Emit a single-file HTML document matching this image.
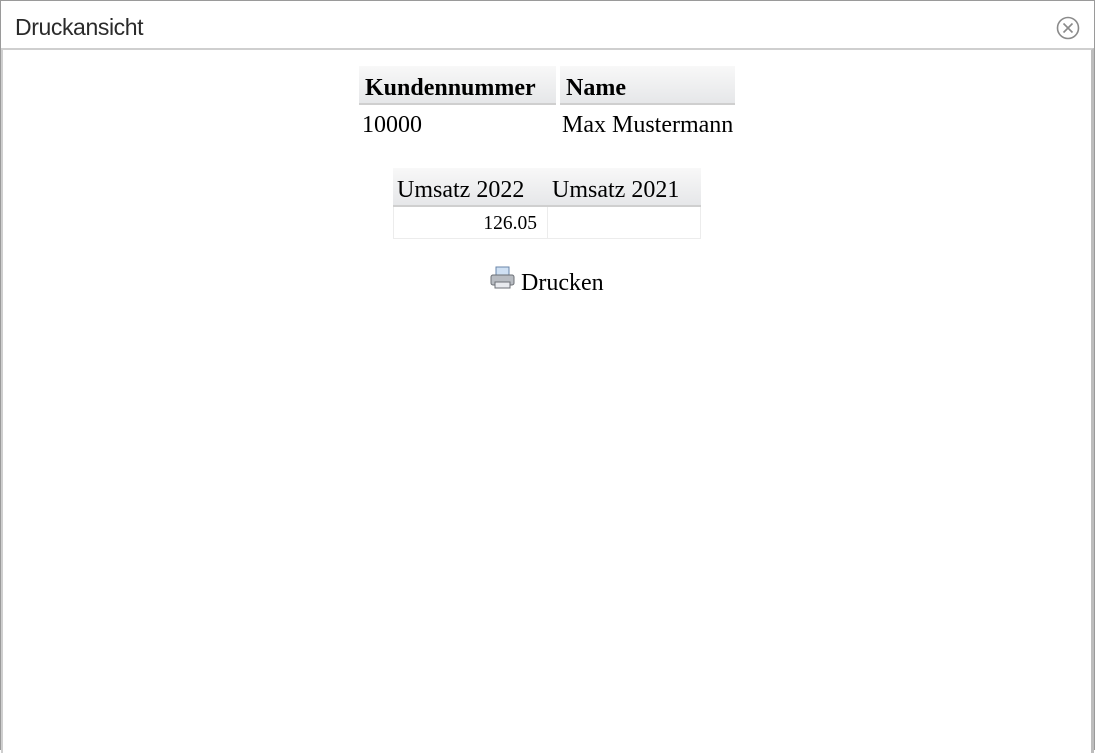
<!DOCTYPE html>
<html><head><style>
body{margin:0;width:1095px;height:751px;overflow:hidden;background:#fff;font-family:"Liberation Serif",serif;}
.win{position:absolute;left:0;top:0;width:1093px;height:749px;border:1px solid #9a9a9a;border-bottom:none;}
.title{position:absolute;left:14px;top:13px;font:23px "Liberation Sans",sans-serif;color:#2a2a2a;letter-spacing:-0.4px}
.close{position:absolute;left:1055px;top:15px;width:24px;height:24px}
.content{position:absolute;left:1px;top:48px;width:1088px;height:703px;border-top:2px solid #cfcfcf;border-left:2px solid #cfcfcf;border-right:3px solid #bdbdbd;}
.th{position:absolute;background:linear-gradient(#f8f8f8,#e6e7e9);border-bottom:2px solid #cfcfcf;box-sizing:border-box;font-size:24px;color:#000;white-space:nowrap}
.t{position:absolute;font-size:24px;color:#000;white-space:nowrap}
</style></head><body>
<div class="win">
<div class="title">Druckansicht</div>
<svg class="close" viewBox="0 0 24 24"><circle cx="12" cy="12" r="10.5" fill="none" stroke="#8a8a8a" stroke-width="1.6"/><path d="M7.5 7.5L16.5 16.5M16.5 7.5L7.5 16.5" stroke="#8a8a8a" stroke-width="1.6"/></svg>
</div>
<div class="content"></div>
<div class="th" style="left:359px;top:66px;width:197px;height:39px;font-weight:bold;padding:9px 0 0 6px">Kundennummer</div>
<div class="th" style="left:560px;top:66px;width:175px;height:39px;font-weight:bold;padding:9px 0 0 6px">Name</div>
<div class="t" style="left:362px;top:112px">10000</div>
<div class="t" style="left:562px;top:112px">Max Mustermann</div>
<div class="th" style="left:393px;top:168px;width:154px;height:39px;padding:9px 0 0 4px">Umsatz 2022</div>
<div class="th" style="left:547px;top:168px;width:154px;height:39px;padding:9px 0 0 5px">Umsatz 2021</div>
<div style="position:absolute;left:393px;top:207px;width:153px;height:31px;border:1px solid #ececec;border-top:none"></div>
<div style="position:absolute;left:547px;top:207px;width:153px;height:31px;border:1px solid #ececec;border-top:none;border-left:none"></div>
<div class="t" style="left:393px;width:144px;text-align:right;top:213px;font-size:19.5px">126.05</div>
<svg style="position:absolute;left:490px;top:266px" width="26" height="24"><rect x="6" y="1" width="13" height="10" fill="#cfe0f3" stroke="#6a86a8"/><rect x="1" y="9" width="23" height="10" rx="2" fill="#b8bcc2" stroke="#6b6f75"/><rect x="5" y="16" width="15" height="6" fill="#e8eaee" stroke="#6b6f75"/></svg>
<div class="t" style="left:521px;top:270px">Drucken</div>
</body></html>
